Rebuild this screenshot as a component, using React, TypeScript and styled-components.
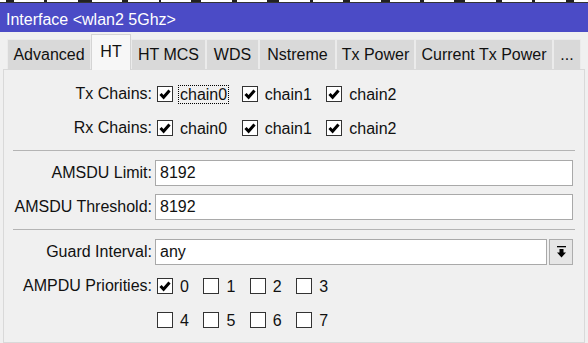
import React from 'react'
import styled, { createGlobalStyle } from 'styled-components'

const GlobalStyle = createGlobalStyle`
  html, body { margin: 0; padding: 0; background: #f0f0f0; }
  body { font-family: "Liberation Sans", Arial, sans-serif; font-size: 16px; color: #111; }
`

// widths as the Windows tab control measured them
const tabs = [
  { name: 'Advanced', width: 84 },
  { name: 'HT', width: 40 },
  { name: 'HT MCS', width: 75 },
  { name: 'WDS', width: 53 },
  { name: 'Nstreme', width: 77 },
  { name: 'Tx Power', width: 79 },
  { name: 'Current Tx Power', width: 138 },
  { name: '...', width: 28 },
]

// bits of the row above that peek out over the title bar
const marks = [8, 3, 14, 6, 2, 10, 5, 12, 3, 7, 9, 4, 11, 6, 3, 8]

export default function App() {
  return <Window>
    <GlobalStyle />
    <TopStrip>
      {marks.map((w, i) => <Mark key={i} style={{ width: w }} />)}
    </TopStrip>
    <TitleBar>Interface &lt;wlan2 5Ghz&gt;</TitleBar>
    <TabBar>
      {tabs.map(t => <Tab key={t.name} $active={t.name === 'HT'} style={{ width: t.width }}>{t.name}</Tab>)}
    </TabBar>
    <Panel>
      <Row>
        <Label>Tx Chains:</Label>
        <CheckGroup>
          <Check checked focused>chain0</Check>
          <Check checked>chain1</Check>
          <Check checked>chain2</Check>
        </CheckGroup>
      </Row>
      <Row>
        <Label>Rx Chains:</Label>
        <CheckGroup>
          <Check checked>chain0</Check>
          <Check checked>chain1</Check>
          <Check checked>chain2</Check>
        </CheckGroup>
      </Row>
      <Separator />
      <Row>
        <Label>AMSDU Limit:</Label>
        <Field>8192</Field>
      </Row>
      <Row>
        <Label>AMSDU Threshold:</Label>
        <Field>8192</Field>
      </Row>
      <Separator />
      <Row>
        <Label>Guard Interval:</Label>
        <SelectWrap>
          <Field>any</Field>
          <DropButton>
            <svg width="11" height="13" viewBox="0 0 11 13">
              <rect x="1" y="0" width="9" height="1.3" fill="#000" />
              <path d="M3.5 3 H7.5 V6.5 H10 L5.5 11.5 L1 6.5 H3.5 Z" fill="#000" />
            </svg>
          </DropButton>
        </SelectWrap>
      </Row>
      <Row>
        <Label>AMPDU Priorities:</Label>
        <CheckGroup>
          <Check checked>0</Check>
          <Check>1</Check>
          <Check>2</Check>
          <Check>3</Check>
        </CheckGroup>
      </Row>
      <Row>
        <Label />
        <CheckGroup>
          <Check>4</Check>
          <Check>5</Check>
          <Check>6</Check>
          <Check>7</Check>
        </CheckGroup>
      </Row>
    </Panel>
  </Window>
}

interface CheckProps {
  checked?: boolean
  focused?: boolean
  children: React.ReactNode
}
function Check({ checked, focused, children }: CheckProps) {
  return <CheckItem>
    <Box>
      {checked && <svg width="14" height="14" viewBox="0 0 14 14">
        <path d="M2.5 7 L5.6 10.3 L11.5 3.5" stroke="#000" strokeWidth="3" fill="none" />
      </svg>}
    </Box>
    <ItemLabel $focused={!!focused}>{children}</ItemLabel>
  </CheckItem>
}

const Window = styled.div`
  width: 588px;
  height: 343px;
  overflow: hidden;
  display: flex;
  flex-direction: column;
  background: #f0f0f0;
`
const TopStrip = styled.div`
  height: 3px;
  flex: none;
  background: #fff;
  display: flex;
  align-items: flex-end;
  justify-content: space-between;
  padding: 0 14px 0 6px;
  border-bottom: 1px solid #333;
  box-sizing: border-box;
`
const Mark = styled.span`
  height: 2px;
  background: #222;
`
const TitleBar = styled.div`
  height: 29px;
  flex: none;
  box-sizing: border-box;
  background: #4b4bc6;
  color: #fff;
  padding: 4px 6px 0;
  display: flex;
  align-items: center;
  white-space: nowrap;
`
const TabBar = styled.div`
  height: 37px;
  flex: none;
  display: flex;
  align-items: flex-end;
  padding-left: 7px;
`
interface TabProps {
  $active: boolean
}
const Tab = styled.div<TabProps>`
  box-sizing: border-box;
  white-space: nowrap;
  display: flex;
  align-items: center;
  justify-content: center;
  height: ${p => p.$active ? 36 : 30}px;
  padding-bottom: ${p => p.$active ? 2 : 0}px;
  margin-bottom: ${p => p.$active ? -1 : 0}px;
  background: ${p => p.$active ? '#f7f7f7' : '#d9d9d9'};
  border: 1px solid ${p => p.$active ? '#d4d4d4' : '#ebebeb'};
  border-bottom: none;
  position: ${p => p.$active ? 'relative' : 'static'};
  z-index: ${p => p.$active ? 1 : 'auto'};
`
const Panel = styled.div`
  flex: 1;
  margin: 0 3px;
  border: 1px solid #d9d9d9;
  background: #f0f0f0;
  padding: 11px 11px 0 0;
  display: flex;
  flex-direction: column;
  gap: 8px;
`
const Row = styled.div`
  display: grid;
  grid-template-columns: 148px 1fr;
  column-gap: 3px;
  height: 26px;
  align-items: center;
`
const Label = styled.div`
  text-align: right;
  white-space: nowrap;
`
const Separator = styled.div`
  height: 1px;
  background: #b4b4b4;
  margin: 1px -2px 1px 9px;
`
const CheckGroup = styled.div`
  display: flex;
  align-items: center;
  gap: 12.5px;
  margin-left: 2px;
`
const CheckItem = styled.div`
  display: flex;
  align-items: center;
  gap: 5px;
`
const Box = styled.div`
  width: 16px;
  height: 16px;
  box-sizing: border-box;
  border: 1px solid #333;
  background: #fff;
  display: flex;
  align-items: center;
  justify-content: center;
`
interface ItemLabelProps {
  $focused: boolean
}
const ItemLabel = styled.span<ItemLabelProps>`
  padding: 0 1px;
  line-height: 17px;
  border: 1px dotted ${p => p.$focused ? '#000' : 'transparent'};
`
const Field = styled.div`
  flex: 1;
  height: 26px;
  box-sizing: border-box;
  border: 1px solid #a9a9a9;
  background: #fff;
  padding: 0 4px;
  display: flex;
  align-items: center;
`
const SelectWrap = styled.div`
  display: flex;
  gap: 2px;
`
const DropButton = styled.div`
  width: 24px;
  height: 26px;
  box-sizing: border-box;
  border: 1px solid #adadad;
  background: #e6e6e6;
  display: flex;
  align-items: center;
  justify-content: center;
`
